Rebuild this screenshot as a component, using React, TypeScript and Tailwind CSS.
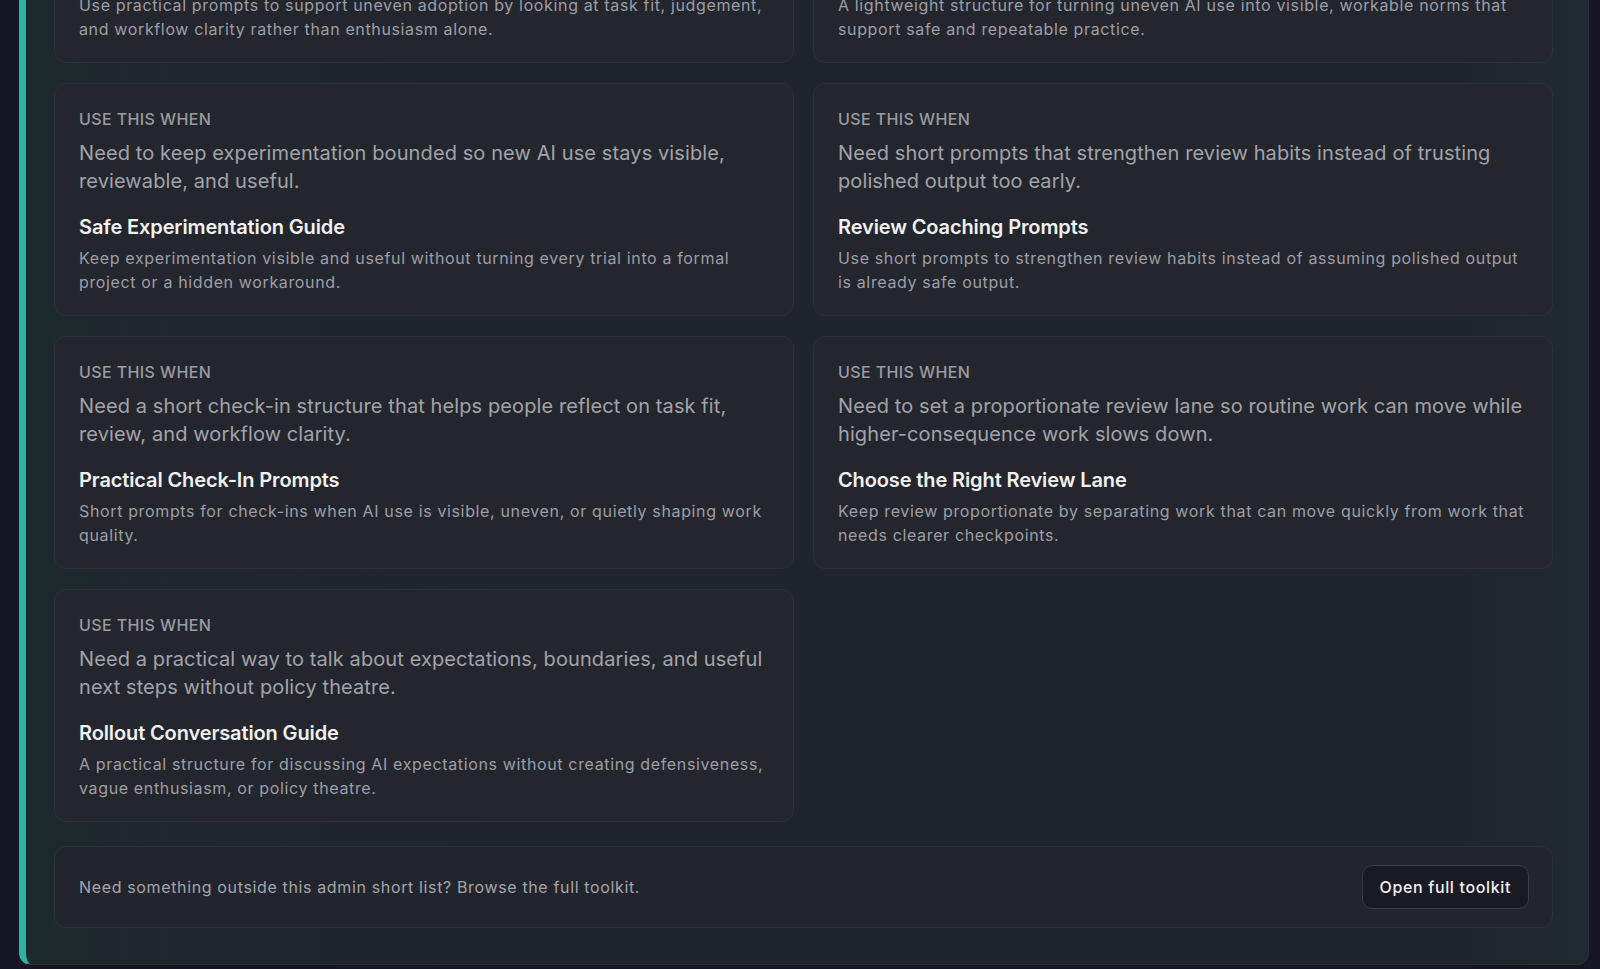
import React from "react";

type Item = { q: string; title: string; desc: string };

const items: Item[] = [
  {
    q: "Need help understanding why some people lean on AI heavily while others barely touch it.",
    title: "Uneven Adoption Prompts",
    desc: "Use practical prompts to support uneven adoption by looking at task fit, judgement, and workflow clarity rather than enthusiasm alone.",
  },
  {
    q: "Need a simple way to turn scattered AI habits into shared, visible team norms.",
    title: "Team Norms Starter",
    desc: "A lightweight structure for turning uneven AI use into visible, workable norms that support safe and repeatable practice.",
  },
  {
    q: "Need to keep experimentation bounded so new AI use stays visible, reviewable, and useful.",
    title: "Safe Experimentation Guide",
    desc: "Keep experimentation visible and useful without turning every trial into a formal project or a hidden workaround.",
  },
  {
    q: "Need short prompts that strengthen review habits instead of trusting polished output too early.",
    title: "Review Coaching Prompts",
    desc: "Use short prompts to strengthen review habits instead of assuming polished output is already safe output.",
  },
  {
    q: "Need a short check-in structure that helps people reflect on task fit, review, and workflow clarity.",
    title: "Practical Check-In Prompts",
    desc: "Short prompts for check-ins when AI use is visible, uneven, or quietly shaping work quality.",
  },
  {
    q: "Need to set a proportionate review lane so routine work can move while higher-consequence work slows down.",
    title: "Choose the Right Review Lane",
    desc: "Keep review proportionate by separating work that can move quickly from work that needs clearer checkpoints.",
  },
  {
    q: "Need a practical way to talk about expectations, boundaries, and useful next steps without policy theatre.",
    title: "Rollout Conversation Guide",
    desc: "A practical structure for discussing AI expectations without creating defensiveness, vague enthusiasm, or policy theatre.",
  },
];

function Card({ item }: { item: Item }) {
  return (
    <div className="rounded-xl border border-[#2e3038] bg-[#24262e] px-6 pt-[25px] pb-[21px]">
      <div className="text-base leading-5 font-medium uppercase tracking-wide text-[#9a9ba3]">
        Use this when
      </div>
      <p className="mt-[10px] text-xl leading-7 tracking-[0.005em] text-[#a2a3aa]">{item.q}</p>
      <h3 className="mt-[18px] text-xl leading-7 font-semibold tracking-[-0.006em] text-[#f1f1f3]">{item.title}</h3>
      <p className="mt-[5px] text-base leading-6 tracking-[0.04em] text-[#9d9ea6]">{item.desc}</p>
    </div>
  );
}

export default function App() {
  return (
    <div
      className="h-[969px] overflow-hidden bg-[#171624] pl-[19px] pr-[11px]"
      style={{ fontFamily: "Inter, 'Noto Sans', 'Liberation Sans', sans-serif" }}
    >
      <div className="-mt-[203px] rounded-xl border border-[#2b2f37] border-l-[7px] border-l-[#2bb3a3] bg-[linear-gradient(90deg,#1c2a2b_0%,#20262d_10%,#20242c_50%,#20252d_92%,#1f2b2e_100%)] pt-8 pl-[28px] pr-[35px] pb-[36px]">
        <div className="grid grid-cols-2 gap-x-[19px] gap-y-5">
          {items.map((it, i) => (
            <Card key={i} item={it} />
          ))}
        </div>
        <div className="mt-6 flex items-center justify-between rounded-xl border border-[#2e3038] bg-[#22252d] py-[18px] pl-6 pr-[23px]">
          <p className="text-base tracking-[0.04em] text-[#a4a5ac]">
            Need something outside this admin short list? Browse the full toolkit.
          </p>
          <button className="h-11 rounded-[10px] border border-[#3a3c46] bg-[#1a1a23] px-[17px] text-base font-medium tracking-[0.04em] text-[#f0f0f2]">
            Open full toolkit
          </button>
        </div>
      </div>
    </div>
  );
}
